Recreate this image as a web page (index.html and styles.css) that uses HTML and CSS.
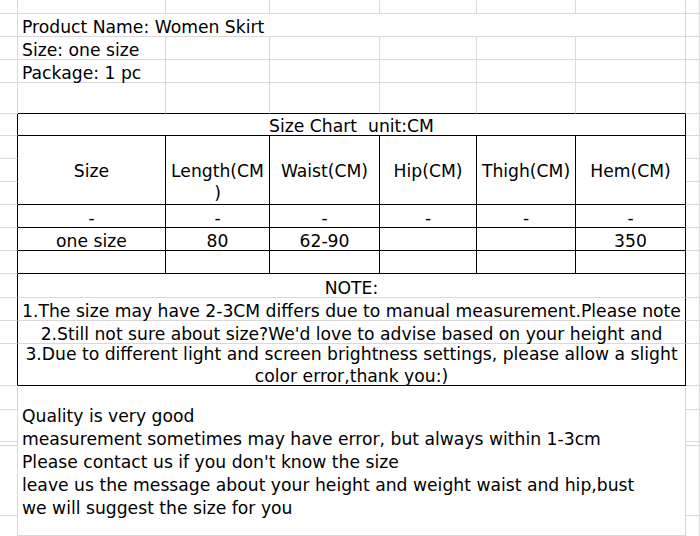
FILE: index.html
```html
<!DOCTYPE html>
<html>
<head>
<meta charset="utf-8">
<link rel="stylesheet" href="styles.css">
</head>
<body>
<div class="sheet">
  <!-- row 0 -->
  <div class="c"></div><div class="c"></div><div class="c"></div><div class="c"></div><div class="c"></div><div class="c"></div><div class="c"></div><div class="c"></div>
  <!-- row 1 -->
  <div class="c"></div>
  <div class="c span6 txt left">Product Name: Women Skirt</div>
  <div class="c"></div>
  <!-- row 2 -->
  <div class="c"></div>
  <div class="c txt left">Size: one size</div>
  <div class="c"></div><div class="c"></div><div class="c"></div><div class="c"></div><div class="c"></div>
  <div class="c"></div>
  <!-- row 3 -->
  <div class="c"></div>
  <div class="c txt left">Package: 1 pc</div>
  <div class="c"></div><div class="c"></div><div class="c"></div><div class="c"></div><div class="c"></div>
  <div class="c"></div>
  <!-- row 4 -->
  <div class="c"></div>
  <div class="c top"></div><div class="c top"></div><div class="c top"></div><div class="c top"></div><div class="c top"></div><div class="c top"></div>
  <div class="c"></div>
  <!-- row 5 -->
  <div class="c edge"></div>
  <div class="c t span6 txt mid">Size Chart&nbsp; unit:CM</div>
  <div class="c"></div>
  <!-- rows 6-8 header -->
  <div class="c edge r6"></div>
  <div class="c t hdr">Size</div>
  <div class="c t hdr">Length(CM<br>)</div>
  <div class="c t hdr">Waist(CM)</div>
  <div class="c t hdr">Hip(CM)</div>
  <div class="c t hdr">Thigh(CM)</div>
  <div class="c t hdr">Hem(CM)</div>
  <div class="c r6 c7"></div>
  <div class="c edge r7"></div><div class="c r7 c7"></div>
  <div class="c edge r8"></div><div class="c r8 c7"></div>
  <!-- row 9 -->
  <div class="c edge"></div>
  <div class="c t txt mid">-</div><div class="c t txt mid">-</div><div class="c t txt mid">-</div><div class="c t txt mid">-</div><div class="c t txt mid">-</div><div class="c t txt mid">-</div>
  <div class="c"></div>
  <!-- row 10 -->
  <div class="c edge"></div>
  <div class="c t txt mid">one size</div><div class="c t txt mid">80</div><div class="c t txt mid">62-90</div><div class="c t txt mid"></div><div class="c t txt mid"></div><div class="c t txt mid">350</div>
  <div class="c"></div>
  <!-- row 11 -->
  <div class="c edge"></div>
  <div class="c t"></div><div class="c t"></div><div class="c t"></div><div class="c t"></div><div class="c t"></div><div class="c t"></div>
  <div class="c"></div>
  <!-- rows 12-15 note -->
  <div class="c edge"></div>
  <div class="c n span6 txt mid">NOTE:</div>
  <div class="c"></div>
  <div class="c edge"></div>
  <div class="c n span6 txt mid">1.The size may have 2-3CM differs due to manual measurement.Please note</div>
  <div class="c"></div>
  <div class="c edge"></div>
  <div class="c n span6 txt mid">2.Still not sure about size?We'd love to advise based on your height and</div>
  <div class="c"></div>
  <div class="c edge"></div>
  <div class="c t span6 txt mid wrap"><span class="lines">3.Due to different light and screen brightness settings, please allow a slight<br>color error,thank you:)</span></div>
  <div class="c"></div>
  <!-- rows 16-20 free text -->
  <div class="c r16"></div>
  <div class="c span6 free">Quality is very good<br>measurement sometimes may have error, but always within 1-3cm<br>Please contact us if you don't know the size<br>leave us the message about your height and weight waist and hip,bust<br>we will suggest the size for you</div>
  <div class="c r16 c7"></div>
  <div class="c r17"></div><div class="c r17 c7"></div>
  <div class="c r18"></div><div class="c r18 c7"></div>
  <div class="c r19"></div><div class="c r19 c7"></div>
  <div class="c r20 last"></div><div class="c r20 c7 last"></div>
</div>
</body>
</html>
```

FILE: styles.css
```css
html, body {
  margin: 0;
  padding: 0;
  background: #ffffff;
}

.sheet {
  display: grid;
  width: 700px;
  height: 536px;
  overflow: hidden;
  grid-template-columns: 18px 148px 104px 110px 97px 99px 110px 14px;
  grid-template-rows: 14px 23px 23px 23px 31px 22px 23px 23px 23px 23px 23px 23px 24px 23px 23px 42px 24px 32px 4px 70px 20px;
  font-family: "DejaVu Sans", Verdana, sans-serif;
  font-size: 17.2px;
  color: #000;
}

.c {
  box-sizing: border-box;
  border-right: 1px solid #d9d9d9;
  border-bottom: 1px solid #d9d9d9;
  min-width: 0;
}

.last {
  border-bottom: none;
}

.span6 {
  grid-column: span 6;
}

.top {
  border-bottom-color: #000;
}

.edge {
  border-right-color: #000;
}

.t {
  border-right-color: #000;
  border-bottom-color: #000;
}

.n {
  border-right-color: #000;
}

.txt {
  display: flex;
  align-items: flex-end;
  white-space: nowrap;
  line-height: 18px;
}

.left {
  justify-content: flex-start;
  padding-left: 4px;
}

.mid {
  justify-content: center;
  text-align: center;
}

.wrap {
  line-height: 22px;
}

.lines {
  margin-bottom: -2px;
}

.hdr {
  grid-row: span 3;
  display: flex;
  justify-content: center;
  text-align: center;
  white-space: nowrap;
  line-height: 22px;
  padding-top: 24px;
}

.r6 { grid-row: 7; }
.r7 { grid-row: 8; }
.r8 { grid-row: 9; }
.c7 { grid-column: 8; }

.r16 { grid-row: 17; }
.r17 { grid-row: 18; }
.r18 { grid-row: 19; }
.r19 { grid-row: 20; }
.r20 { grid-row: 21; }

.free {
  grid-row: 17 / span 5;
  grid-column: 2 / span 6;
  white-space: nowrap;
  line-height: 23px;
  padding-top: 19px;
  padding-left: 4px;
}
```
